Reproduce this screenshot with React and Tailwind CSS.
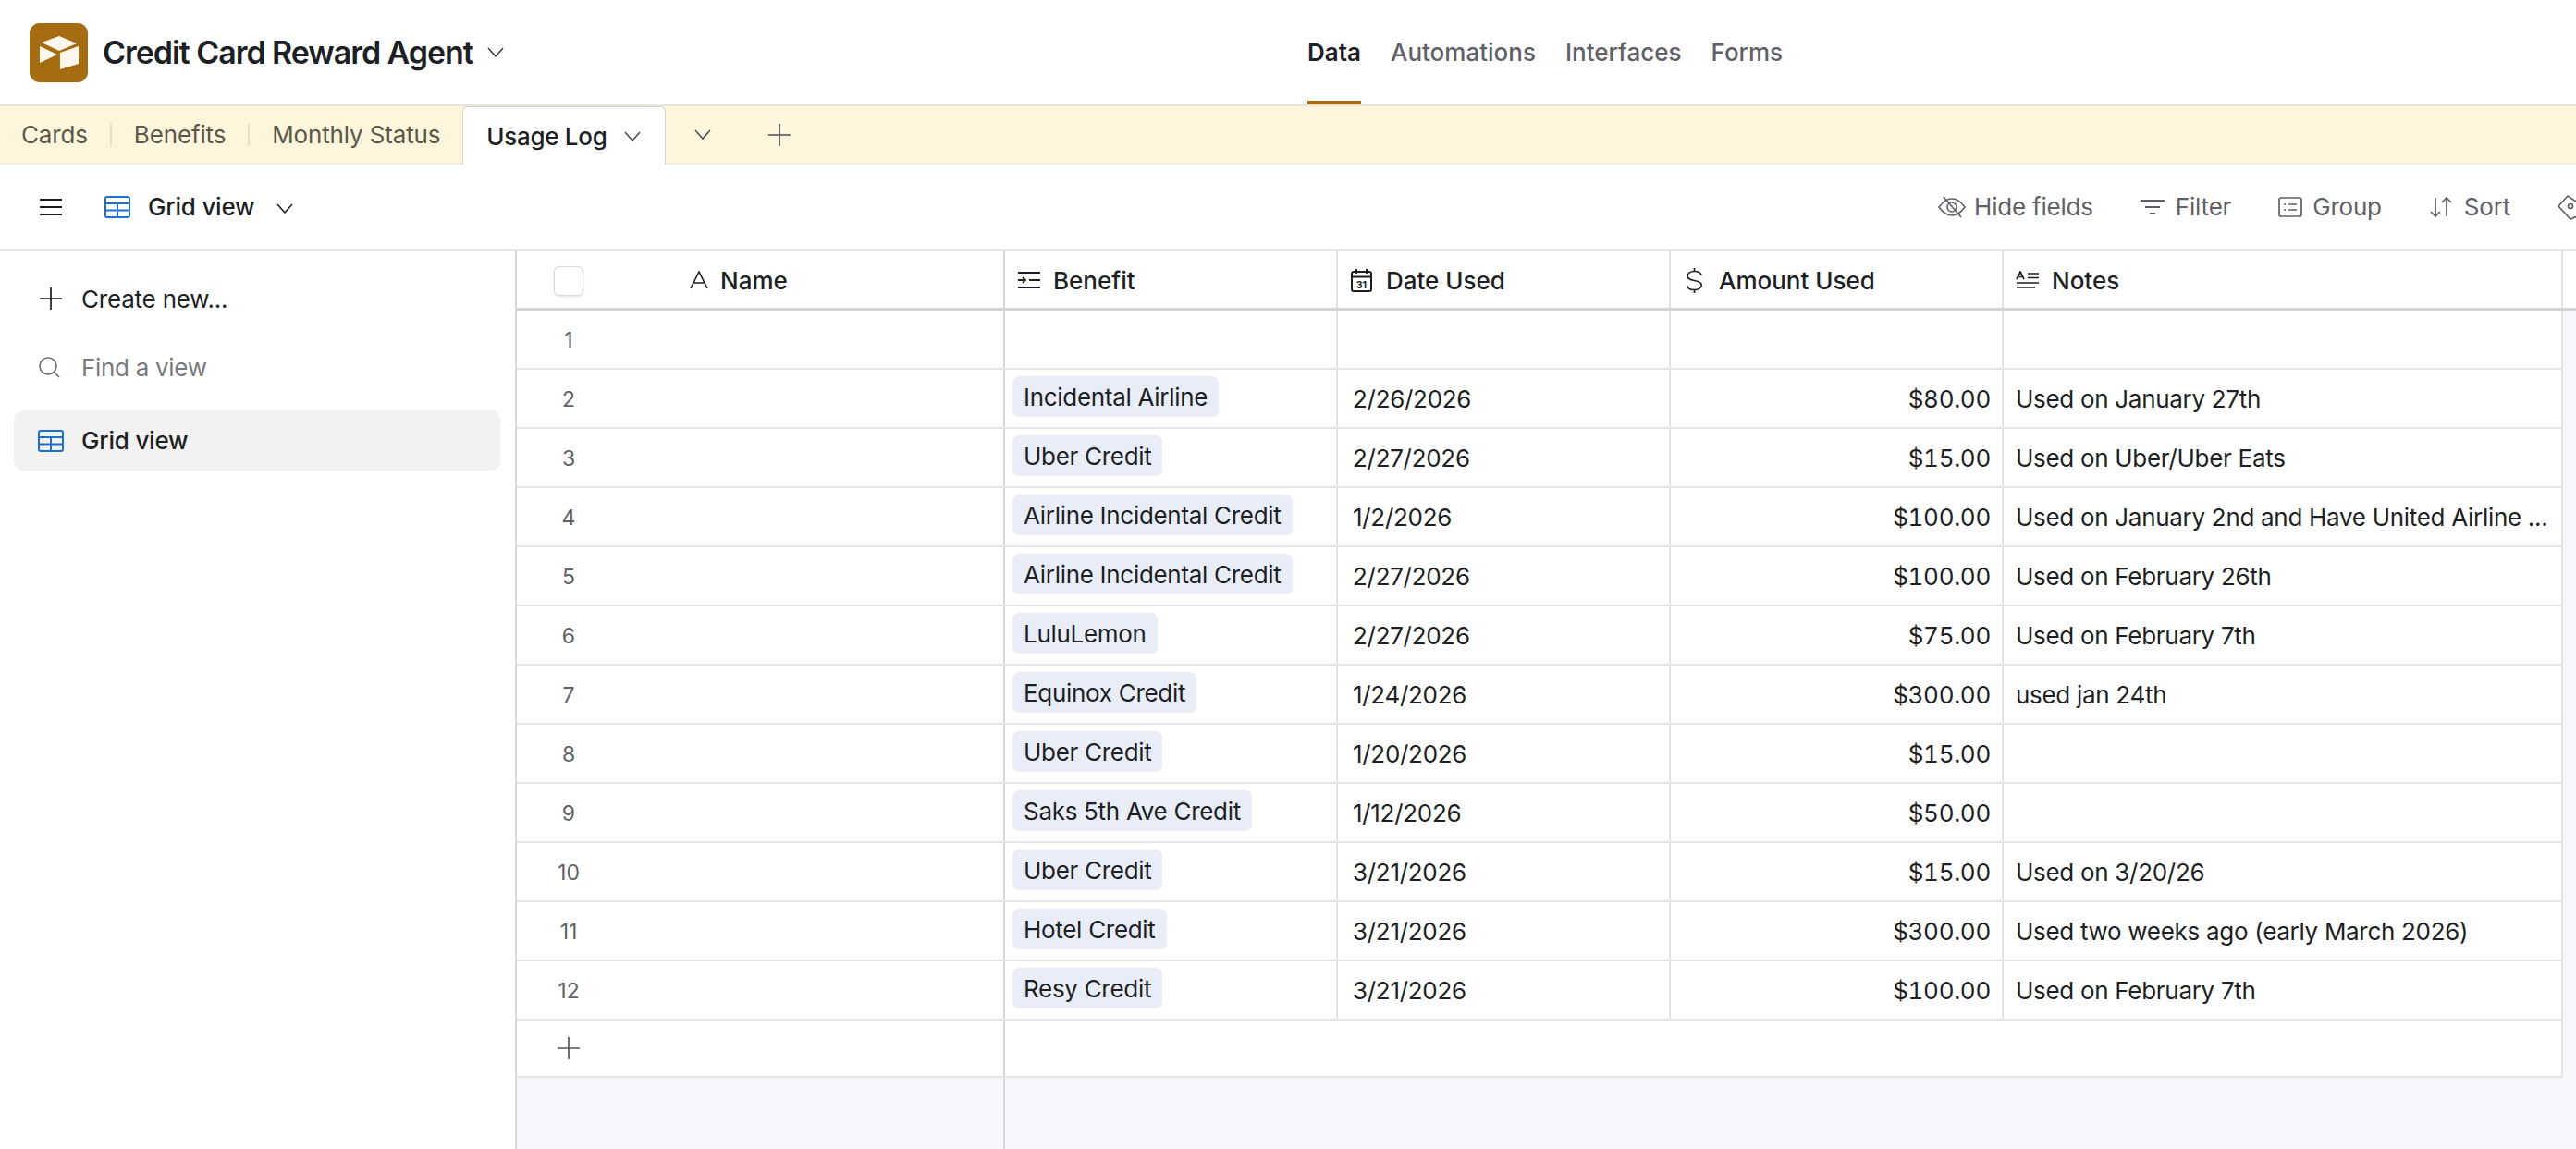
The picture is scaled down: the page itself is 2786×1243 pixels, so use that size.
const rows = [
  { n: 1 },
  { n: 2, benefit: 'Incidental Airline', date: '2/26/2026', amount: '$80.00', notes: 'Used on January 27th' },
  { n: 3, benefit: 'Uber Credit', date: '2/27/2026', amount: '$15.00', notes: 'Used on Uber/Uber Eats' },
  { n: 4, benefit: 'Airline Incidental Credit', date: '1/2/2026', amount: '$100.00', notes: 'Used on January 2nd and Have United Airline ...' },
  { n: 5, benefit: 'Airline Incidental Credit', date: '2/27/2026', amount: '$100.00', notes: 'Used on February 26th' },
  { n: 6, benefit: 'LuluLemon', date: '2/27/2026', amount: '$75.00', notes: 'Used on February 7th' },
  { n: 7, benefit: 'Equinox Credit', date: '1/24/2026', amount: '$300.00', notes: 'used jan 24th' },
  { n: 8, benefit: 'Uber Credit', date: '1/20/2026', amount: '$15.00' },
  { n: 9, benefit: 'Saks 5th Ave Credit', date: '1/12/2026', amount: '$50.00' },
  { n: 10, benefit: 'Uber Credit', date: '3/21/2026', amount: '$15.00', notes: 'Used on 3/20/26' },
  { n: 11, benefit: 'Hotel Credit', date: '3/21/2026', amount: '$300.00', notes: 'Used two weeks ago (early March 2026)' },
  { n: 12, benefit: 'Resy Credit', date: '3/21/2026', amount: '$100.00', notes: 'Used on February 7th' },
];

function GridIcon({ className }) {
  return (
    <svg viewBox="0 0 28 24" className={className} fill="none" stroke="#1f6fd0" strokeWidth="2">
      <rect x="1" y="1" width="26" height="22" rx="2" />
      <path d="M1 8h26M1 15.5h26M14 8v15" />
    </svg>
  );
}

function Logo() {
  return (
    <svg viewBox="0 0 63 64" className="w-[63px] h-[64px] shrink-0">
      <rect width="63" height="64" rx="11" fill="#a66c12" />
      <path d="M32 14 L51 22 L32 30 L13 21 Z" fill="#fdf8ee" />
      <path d="M33 32 L53 25 L53 44 L33 50 Z" fill="#fdf8ee" />
      <path d="M11 25 L30 34 L11 43 Z" fill="#fdf8ee" />
    </svg>
  );
}

function Chevron({ className }) {
  return (
    <svg viewBox="0 0 18 11" className={`w-[18px] h-[11px] ${className}`} fill="none" stroke="currentColor" strokeWidth="1.5">
      <path d="M1 1 L9 10 L17 1" />
    </svg>
  );
}

function PlusIcon({ className }) {
  return (
    <svg viewBox="0 0 24 24" className={`w-[24px] h-[24px] ${className}`} fill="none" stroke="currentColor" strokeWidth="1.7">
      <path d="M12 0v24M0 12h24" />
    </svg>
  );
}

function ToolItem({ icon, label, className }) {
  return (
    <div className={`flex items-center ${className}`}>
      {icon}
      <span className="text-[26px] tracking-[-0.2px] text-[#5f6168]">{label}</span>
    </div>
  );
}

function HeaderCell({ icon, label, className }) {
  return (
    <div className={`flex items-center h-full pt-[2px] ${className}`}>
      {icon}
      <span className="text-[26px] font-medium text-[#1d1f25]">{label}</span>
    </div>
  );
}

export default function App() {
  return (
    <div className="w-full h-[1243px] flex flex-col overflow-hidden bg-white font-['Inter',sans-serif] text-[#1d1f25]">
      {/* top bar */}
      <div className="h-[113px] shrink-0 flex items-center">
        <div className="w-[1414px] shrink-0 flex items-center pl-[32px]">
          <Logo />
          <span className="ml-[16px] text-[34px] font-semibold tracking-[-1.05px]">Credit Card Reward Agent</span>
          <Chevron className="ml-[15px] text-[#3a3c42]" />
        </div>
        <div className="flex h-full text-[26px] font-medium text-[#5f6168]">
          <div className="h-full flex items-center border-b-[4px] border-[#a66c12] pt-[4px] text-[#1d1f25] font-semibold">Data</div>
          <div className="h-full flex items-center ml-[32px]">Automations</div>
          <div className="h-full flex items-center ml-[32px]">Interfaces</div>
          <div className="h-full flex items-center ml-[32px]">Forms</div>
        </div>
      </div>

      {/* table tabs */}
      <div className="h-[65px] shrink-0 flex items-stretch bg-[#fdf5dc] border-t-2 border-b-2 border-t-[#e8e4da] border-b-[#f0ecdf] text-[26px] tracking-[-0.15px] text-[#5c574a]">
        <div className="flex items-center pl-[23px] pr-[24px]">Cards</div>
        <div className="w-[2px] h-[24px] self-center bg-[#e6dfc8]" />
        <div className="flex items-center pl-[24px] pr-[24px]">Benefits</div>
        <div className="w-[2px] h-[24px] self-center bg-[#e6dfc8]" />
        <div className="flex items-center pl-[24px] pr-[24px]">Monthly Status</div>
        <div className="w-[220px] -mb-[2px] bg-white rounded-t-[6px] border border-b-0 border-[#d5d3cc] flex items-center pl-[25px] font-medium tracking-[-0.3px] text-[#1d1f25]">
          Usage Log
          <Chevron className="ml-[19px] text-[#4a4c52]" />
        </div>
        <div className="flex items-center pl-[31px] text-[#4a4c52]">
          <Chevron />
          <PlusIcon className="ml-[62px]" />
        </div>
      </div>

      {/* view toolbar */}
      <div className="h-[93px] shrink-0 flex items-center border-b-2 border-[#e5e5e5] overflow-hidden">
        <svg viewBox="0 0 24 18" className="ml-[43px] w-[24px] h-[18px]" fill="none" stroke="#1d1f25" strokeWidth="2">
          <path d="M0 1h24M0 9h24M0 17h24" />
        </svg>
        <GridIcon className="ml-[46px] w-[28px] h-[24px]" />
        <span className="ml-[19px] text-[26px] font-medium tracking-[-0.2px]">Grid view</span>
        <Chevron className="ml-[24px] mt-[4px]" />
        <div className="ml-auto flex items-center">
          <ToolItem
            label="Hide fields"
            icon={
              <svg viewBox="0 0 30 24" className="w-[30px] h-[24px] mr-[9px]" fill="none" stroke="#5f6168" strokeWidth="1.6">
                <path d="M1 12C6 5 10 3 15 3s9 2 14 9c-5 7-9 9-14 9S6 19 1 12Z" />
                <circle cx="15" cy="12" r="5" />
                <path d="M6 1 L25 23" />
              </svg>
            }
          />
          <ToolItem
            className="ml-[50px]"
            label="Filter"
            icon={
              <svg viewBox="0 0 28 18" className="w-[28px] h-[18px] mr-[11px]" fill="none" stroke="#5f6168" strokeWidth="2">
                <path d="M1 2h26M6 9h16M11 16h6" />
              </svg>
            }
          />
          <ToolItem
            className="ml-[51px]"
            label="Group"
            icon={
              <svg viewBox="0 0 26 22" className="w-[26px] h-[22px] mr-[11px]" fill="none" stroke="#5f6168" strokeWidth="1.7">
                <rect x="1" y="1" width="24" height="20" rx="2" />
                <path d="M6 8h2M11 8h9M6 14h2M11 14h9" />
              </svg>
            }
          />
          <ToolItem
            className="ml-[52px]"
            label="Sort"
            icon={
              <svg viewBox="0 0 24 24" className="w-[24px] h-[24px] mr-[13px]" fill="none" stroke="#5f6168" strokeWidth="1.7">
                <path d="M6 2v20M1 17l5 5 5-5M18 22V2M13 7l5-5 5 5" />
              </svg>
            }
          />
          <svg viewBox="0 0 30 30" className="ml-[50px] mr-[-9px] w-[30px] h-[30px]" fill="none" stroke="#5f6168" strokeWidth="1.7">
            <path d="M2 14 L12 3 L27 13 L27 23 L15 28 Z" />
            <circle cx="15" cy="14" r="2.5" />
          </svg>
        </div>
      </div>

      <div className="flex-1 flex min-h-0">
        {/* views sidebar */}
        <div className="w-[559px] shrink-0 border-r-2 border-[#d9d9d9] pt-[27px]">
          <div className="h-[50px] flex items-center pl-[43px]">
            <PlusIcon />
            <span className="ml-[21px] text-[26px] tracking-[-0.2px]">Create new...</span>
          </div>
          <div className="mt-[24px] h-[50px] flex items-center pl-[42px]">
            <svg viewBox="0 0 23 23" className="w-[23px] h-[23px]" fill="none" stroke="#6b6d73" strokeWidth="1.6">
              <circle cx="10" cy="10" r="9" />
              <path d="M16.500 16.500 L22 22" />
            </svg>
            <span className="ml-[23px] text-[26px] tracking-[-0.3px] text-[#77797f]">Find a view</span>
          </div>
          <div className="mt-[22px] mx-[15px] w-[526px] h-[65px] bg-[#f2f2f2] rounded-[10px] flex items-center pl-[26px]">
            <GridIcon className="w-[28px] h-[24px]" />
            <span className="ml-[19px] text-[26px] font-medium tracking-[-0.2px]">Grid view</span>
          </div>
        </div>

        {/* grid */}
        <div className="flex-1 bg-[#f5f7fa] relative">
          <div className="h-[65px] flex items-stretch bg-white border-b-[3px] border-[#d4d4d4]">
            <div className="w-[528px] shrink-0 flex items-center border-r-2 border-[#d6d6d6]">
              <div className="ml-[40px] mt-[3px] w-[32px] h-[32px] rounded-[6px] bg-white border border-[#d9d9d9] shadow-sm" />
              <HeaderCell
                className="ml-[114px]"
                label="Name"
                icon={
                  <svg viewBox="0 0 22 20" className="w-[22px] h-[20px] mr-[12px]" fill="none" stroke="#1d1f25" strokeWidth="1.6">
                    <path d="M2 19 L11 1 L20 19M5 13h12" />
                  </svg>
                }
              />
            </div>
            <div className="w-[360px] shrink-0 border-r-2 border-[#e3e3e3] pl-[13px]">
              <HeaderCell
                label="Benefit"
                icon={
                  <svg viewBox="0 0 26 20" className="w-[26px] h-[20px] mr-[13px]" fill="none" stroke="#1d1f25" strokeWidth="1.8">
                    <path d="M1 2h24M13 10h12M1 18h24M1 10h8M6 7l3 3-3 3" />
                  </svg>
                }
              />
            </div>
            <div className="w-[360px] shrink-0 border-r-2 border-[#e3e3e3] pl-[14px]">
              <HeaderCell
                label="Date Used"
                icon={
                  <svg viewBox="0 0 23 25" className="w-[23px] h-[25px] mr-[15px]" fill="none" stroke="#1d1f25" strokeWidth="2">
                    <rect x="1" y="3" width="21" height="21" rx="2" />
                    <path d="M1 8.500h21M6 0v5M17 0v5" />
                    <text x="11.500" y="21" textAnchor="middle" fontSize="10.500" fontWeight="700" fill="#1d1f25" stroke="none">31</text>
                  </svg>
                }
              />
            </div>
            <div className="w-[360px] shrink-0 border-r-2 border-[#e3e3e3] pl-[16px]">
              <HeaderCell
                label="Amount Used"
                icon={
                  <svg viewBox="0 0 19 27" className="w-[19px] h-[27px] mr-[17px]" fill="none" stroke="#1d1f25" strokeWidth="1.7">
                    <path d="M9.500 0v3.500M9.500 23.500v3.500M17 8c-.5-3-3.500-4.500-7.500-4.500S2 5.500 2 8.500s3 4.200 7.500 5c4.500.8 7.700 2 7.700 5s-3.200 5-7.700 5-7.800-1.800-8-5" />
                  </svg>
                }
              />
            </div>
            <div className="w-[605px] shrink-0 border-r-2 border-[#e3e3e3] pl-[13px]">
              <HeaderCell
                label="Notes"
                icon={
                  <svg viewBox="0 0 26 20" className="w-[26px] h-[20px] mr-[13px]" fill="none" stroke="#1d1f25" strokeWidth="1.7">
                    <path d="M1 9 L5 1 L9 9M3 6.500h4M13 3h12M13 7.500h12M1 13h24M1 18h20" />
                  </svg>
                }
              />
            </div>
          </div>

          {rows.map((r) => (
            <div key={r.n} className="w-[2213px] h-[64px] flex items-stretch bg-white border-b-2 border-[#e5e5e5] text-[26px] tracking-[-0.3px]">
              <div className="w-[528px] shrink-0 flex items-center border-r-2 border-[#d6d6d6]">
                <span className="w-[112px] pt-[2px] text-center text-[23px] tracking-normal text-[#5f6168]">{r.n}</span>
              </div>
              <div className="w-[360px] shrink-0 border-r-2 border-[#e3e3e3] pl-[8px] flex items-center pb-[4px]">
                {r.benefit && (
                  <span className="h-[44px] flex items-center px-[12px] rounded-[7px] bg-[#e9edf8] whitespace-nowrap">{r.benefit}</span>
                )}
              </div>
              <div className="w-[360px] shrink-0 border-r-2 border-[#e3e3e3] pl-[16px] flex items-center">{r.date}</div>
              <div className="w-[360px] shrink-0 border-r-2 border-[#e3e3e3] pr-[12px] flex items-center justify-end tabular-nums">{r.amount}</div>
              <div className="w-[605px] shrink-0 border-r-2 border-[#e3e3e3] pl-[13px] flex items-center whitespace-nowrap overflow-hidden">{r.notes}</div>
            </div>
          ))}

          <div className="w-[2213px] h-[62px] flex items-stretch bg-white border-b-2 border-[#e5e5e5]">
            <div className="w-[528px] shrink-0 flex items-center border-r-2 border-[#d6d6d6] pl-[44px] text-[#55575d]">
              <PlusIcon />
            </div>
            <div className="flex-1 border-r-2 border-[#e3e3e3]" />
          </div>

          {/* frozen column divider carries on below the last row */}
          <div className="absolute left-[526px] top-[895px] bottom-0 w-[2px] bg-[#d6d6d6]" />
        </div>
      </div>
    </div>
  );
}
